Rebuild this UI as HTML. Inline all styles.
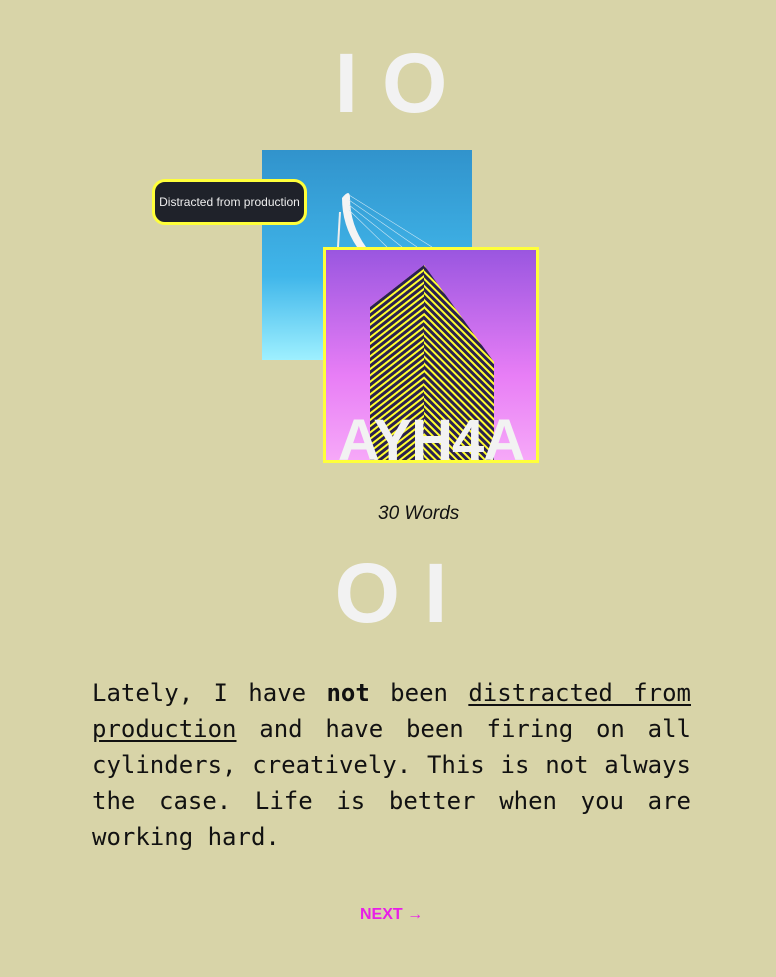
<!DOCTYPE html>
<html><head><meta charset="utf-8"><style>
*{margin:0;padding:0;box-sizing:border-box}
html,body{width:776px;height:977px;background:#d8d4a8;overflow:hidden}
body{position:relative;font-family:"Liberation Sans",sans-serif}
.h{position:absolute;left:3px;width:776px;text-align:center;color:#f2f2f2;font-weight:bold;font-size:84px;line-height:1;letter-spacing:24px;text-indent:24px}
.blue{position:absolute;left:262px;top:150px;width:210px;height:210px;background:linear-gradient(#3193cc,#40b6ea 60%,#9ef0ff)}
.pur{position:absolute;left:323px;top:247px;width:216px;height:216px;border:3px solid #ffff3a;background:linear-gradient(#9a56e0,#e87ef6 60%,#f6a8f8);overflow:hidden}
.ay{position:absolute;left:0;right:0;bottom:-14px;text-align:center;color:#f2f2f2;font-weight:bold;font-size:58px;letter-spacing:-1px}
.tip{position:absolute;left:152px;top:179px;width:155px;height:46px;background:#1f222a;border:3px solid #ffff3a;border-radius:13px;color:#eee;font-size:12px;line-height:40px;text-align:center}
.w{position:absolute;left:378px;top:503px;font-style:italic;font-size:19px;color:#111}
.p{position:absolute;left:92px;top:675px;width:599px;font-family:"DejaVu Sans Mono","Liberation Mono",monospace;font-size:24px;line-height:36px;text-align:justify;color:#111}
.p u{text-underline-offset:3px}
.n{position:absolute;left:360px;top:906px;color:#e81ee8;font-size:16px;white-space:nowrap;font-weight:600}
</style></head><body>
<div class="h" style="top:41px">IO</div>
<div class="blue">
<svg width="210" height="210" style="position:absolute;left:0;top:0">
<path d="M80 48 Q88 38 88 48 Q88 75 104 97 L95 97 Q80 75 80 48Z" fill="#f4f4f4"/>
<line x1="78" y1="62" x2="76" y2="97" stroke="#eee" stroke-width="2"/>
<g stroke="#cfe8f5" stroke-width="0.6"><line x1="87" y1="45" x2="170" y2="97"/><line x1="87" y1="50" x2="155" y2="97"/><line x1="87" y1="55" x2="140" y2="97"/><line x1="87" y1="60" x2="125" y2="97"/></g>
</svg>
</div>
<div class="pur">
<svg width="210" height="210" style="position:absolute;left:0;top:0">
<defs>
<pattern id="a" width="10" height="5" patternUnits="userSpaceOnUse" patternTransform="rotate(-38)"><rect width="10" height="5" fill="#2a2050"/><rect width="10" height="2" fill="#ffff30"/></pattern>
<pattern id="b" width="10" height="5" patternUnits="userSpaceOnUse" patternTransform="rotate(45)"><rect width="10" height="5" fill="#2a2050"/><rect width="10" height="2" fill="#ffff30"/></pattern>
</defs>
<polygon points="44,57 98,15 98,215 44,215" fill="url(#a)"/>
<polygon points="98,15 168,112 168,215 98,215" fill="url(#b)"/>
</svg>
<div class="ay">AYH4A</div>
</div>
<div class="tip">Distracted from production</div>
<div class="w">30 Words</div>
<div class="h" style="top:551px">OI</div>
<div class="p">Lately, I have <b>not</b> been <u>distracted from production</u> and have been firing on all cylinders, creatively. This is not always the case. Life is better when you are working hard.</div>
<div class="n">NEXT →</div>
</body></html>
